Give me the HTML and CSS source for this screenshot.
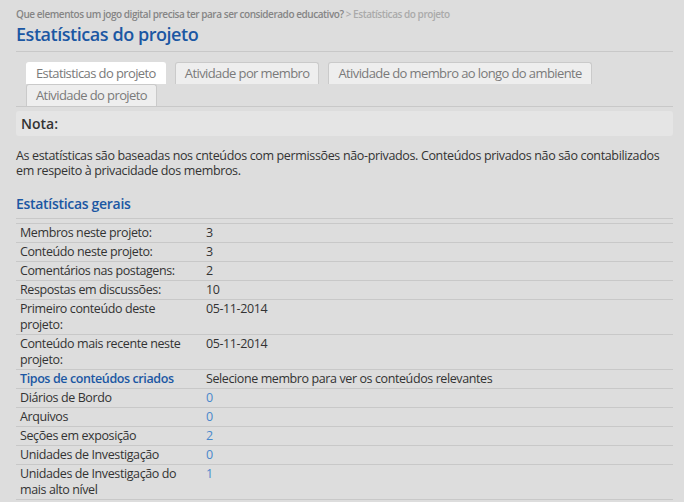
FILE: index.html
```html
<!DOCTYPE html>
<html lang="pt">
<head>
<meta charset="utf-8">
<link rel="stylesheet" href="styles.css">
</head>
<body>
<div class="page">
  <div class="crumbs"><span class="crumb-link">Que elementos um jogo digital precisa ter para ser considerado educativo?</span> <span class="crumb-cur">&gt; Estatísticas do projeto</span></div>
  <h1 class="title">Estatísticas do projeto</h1>
  <ul class="tabs">
    <li class="tab active">Estatisticas do projeto</li>
    <li class="tab">Atividade por membro</li>
    <li class="tab">Atividade do membro ao longo do ambiente</li>
    <li class="tab">Atividade do projeto</li>
  </ul>
  <div class="note">Nota:</div>
  <p class="desc">As estatísticas são baseadas nos cnteúdos com permissões não-privados. Conteúdos privados não são contabilizados em respeito à privacidade dos membros.</p>
  <h2 class="section">Estatísticas gerais</h2>
  <table class="stats">
    <tr><td class="k">Membros neste projeto:</td><td>3</td></tr>
    <tr><td class="k">Conteúdo neste projeto:</td><td>3</td></tr>
    <tr><td class="k">Comentários nas postagens:</td><td>2</td></tr>
    <tr><td class="k">Respostas em discussões:</td><td>10</td></tr>
    <tr><td class="k">Primeiro conteúdo deste projeto:</td><td>05-11-2014</td></tr>
    <tr><td class="k">Conteúdo mais recente neste projeto:</td><td>05-11-2014</td></tr>
    <tr><td class="k head">Tipos de conteúdos criados</td><td>Selecione membro para ver os conteúdos relevantes</td></tr>
    <tr><td class="k">Diários de Bordo</td><td class="num">0</td></tr>
    <tr><td class="k">Arquivos</td><td class="num">0</td></tr>
    <tr><td class="k">Seções em exposição</td><td class="num">2</td></tr>
    <tr><td class="k">Unidades de Investigação</td><td class="num">0</td></tr>
    <tr><td class="k">Unidades de Investigação do mais alto nível</td><td class="num">1</td></tr>
  </table>
</div>
</body>
</html>
```

FILE: styles.css
```css
html, body {
  margin: 0;
  padding: 0;
  background: #dddddd;
}
body {
  font-family: "Open Sans", "DejaVu Sans", sans-serif;
  color: #333;
}
.page {
  width: 657px;
  margin-left: 16px;
  padding-top: 7px;
}
.crumbs {
  font-size: 10px;
  line-height: 14px;
  color: #858585;
  font-weight: 600;
  letter-spacing: -0.45px;
}
.crumb-cur {
  color: #aaaaaa;
}
.title {
  margin: 2px 0 0;
  font-size: 18px;
  line-height: 22px;
  font-weight: 600;
  color: #1b57a3;
  letter-spacing: -0.45px;
  padding-bottom: 6px;
  border-bottom: 1px solid #c8c8c8;
}
.tabs {
  list-style: none;
  margin: 10px 0 0;
  padding: 0 0 0 10px;
  display: flex;
  flex-wrap: wrap;
  column-gap: 9px;
  border-bottom: 1px solid #c8c8c8;
}
.tab {
  height: 21px;
  line-height: 21px;
  padding: 0 9px;
  font-size: 13px;
  letter-spacing: -0.6px;
  color: #7a7a7a;
  background: #eeeeee;
  border: 1px solid #cacaca;
  border-bottom: none;
  border-radius: 3px 3px 0 0;
}
.tab.active {
  background: #ffffff;
  border-color: #ffffff;
}
.note {
  margin-top: 4px;
  height: 25px;
  line-height: 25px;
  padding-left: 5px;
  background: #e5e5e5;
  border-radius: 3px;
  font-size: 14px;
  font-weight: 600;
  color: #333;
}
.desc {
  margin: 12px 0 0;
  font-size: 12.5px;
  line-height: 15px;
  letter-spacing: -0.35px;
  color: #333;
}
.section {
  margin: 17px 0 0;
  font-size: 14px;
  line-height: 18px;
  font-weight: 600;
  letter-spacing: -0.3px;
  color: #1b57a3;
  padding-bottom: 5px;
  border-bottom: 1px solid #c8c8c8;
}
.stats {
  margin-top: 4px;
  width: 100%;
  border-collapse: collapse;
  font-size: 12.5px;
  line-height: 16px;
  letter-spacing: -0.4px;
}
.stats td {
  border-top: 1px solid #c8c8c8;
  border-bottom: 1px solid #c8c8c8;
  padding: 1px 4px;
  vertical-align: top;
}
.stats td.k {
  width: 178px;
}
.stats td.head {
  color: #1b57a3;
  font-weight: 600;
}
.stats td.num {
  color: #4a88cc;
}
```
